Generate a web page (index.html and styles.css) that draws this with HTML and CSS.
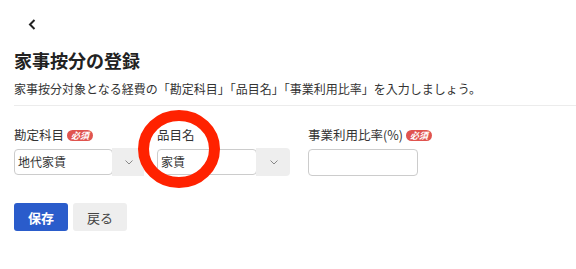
FILE: index.html
```html
<!DOCTYPE html>
<html lang="ja">
<head>
<meta charset="utf-8">
<link rel="stylesheet" href="styles.css">
</head>
<body>
<div class="page">
  <div class="topbar">
    <svg class="back" width="8" height="11" viewBox="0 0 8 11"><path d="M6.5 1 L2 5.5 L6.5 10" fill="none" stroke="#222" stroke-width="2"/></svg>
  </div>
  <h1 class="title">家事按分の登録</h1>
  <p class="desc">家事按分対象となる経費の「勘定科目」「品目名」「事業利用比率」を入力しましょう。</p>
  <div class="divider"></div>
  <div class="form">
    <div class="field f1">
      <div class="label">勘定科目<span class="badge">必須</span></div>
      <div class="select">
        <div class="input w98">地代家賃</div>
        <div class="caret"><svg width="8" height="5" viewBox="0 0 8 5"><path d="M0.5 0.5 L4 4 L7.5 0.5" fill="none" stroke="#888" stroke-width="1"/></svg></div>
      </div>
    </div>
    <div class="field f2">
      <div class="label">品目名</div>
      <div class="select">
        <div class="input w99">家賃</div>
        <div class="caret c2"><svg width="8" height="5" viewBox="0 0 8 5"><path d="M0.5 0.5 L4 4 L7.5 0.5" fill="none" stroke="#888" stroke-width="1"/></svg></div>
      </div>
      <svg class="ring" width="84" height="80" viewBox="0 0 84 80"><ellipse cx="42" cy="40" rx="35.5" ry="33.5" fill="none" stroke="#ff2200" stroke-width="11"/></svg>
    </div>
    <div class="field f3">
      <div class="label">事業利用比率(%)<span class="badge">必須</span></div>
      <div class="input w110"></div>
    </div>
  </div>
  <div class="actions">
    <button class="btn primary">保存</button>
    <button class="btn secondary">戻る</button>
  </div>
</div>
</body>
</html>
```

FILE: styles.css
```css
* { box-sizing: border-box; }
html, body { margin: 0; padding: 0; background: #fff; }
body {
  font-family: "Noto Sans CJK JP", "Noto Sans", sans-serif;
  color: #333;
  width: 576px;
  height: 269px;
  overflow: hidden;
}
.page { padding-left: 14px; }
.topbar { height: 48px; padding-top: 19px; padding-left: 14px; }
.back { display: block; }
.title {
  margin: 0;
  font-size: 18px;
  line-height: 24px;
  font-weight: 700;
  color: #222;
}
.desc {
  margin: 8px 0 0;
  font-size: 12px;
  line-height: 18px;
  color: #333;
  white-space: nowrap;
}
.divider { height: 1px; background: #ececec; margin-top: 7px; }
.form { display: flex; padding-top: 20px; }
.field { position: relative; }
.f1 { width: 143px; }
.f2 { width: 151px; }
.label {
  font-size: 12.5px;
  line-height: 18px;
  height: 18px;
  color: #333;
  display: flex;
  align-items: center;
  white-space: nowrap;
}
.badge {
  display: inline-block;
  margin-left: 3px;
  background: #e0544f;
  color: #fff;
  font-size: 9px;
  line-height: 11px;
  height: 11px;
  padding: 0 4px;
  border-radius: 6px;
  font-weight: 700;
  font-style: italic;
}
.select { display: flex; align-items: center; margin-top: 4px; }
.input {
  height: 26px;
  border: 1px solid #ccc;
  border-radius: 4px;
  background: #fff;
  font-size: 12px;
  line-height: 24px;
  padding-left: 3px;
  color: #333;
}
.f3 .input { margin-top: 5px; height: 27px; }
.w98 { width: 99px; }
.w99 { width: 100px; }
.w110 { width: 110px; }
.caret {
  width: 32px;
  height: 28px;
  background: #eeeeee;
  display: flex;
  align-items: center;
  justify-content: center;
  padding-left: 1px;
  margin-left: -1px;
}
.c2 { width: 34px; border-radius: 0 4px 4px 0; }
.caret svg { display: block; }
.ring { position: absolute; left: -20px; top: -17px; pointer-events: none; }
.actions { display: flex; gap: 5px; margin-top: 27px; }
.btn {
  font-family: "Noto Sans CJK JP", "Noto Sans", sans-serif;
  height: 28px;
  width: 54px;
  border: none;
  border-radius: 3px;
  font-size: 13px;
  padding: 0;
}
.primary { background: #2a5ccb; color: #fff; font-weight: 700; }
.secondary { background: #eeeeee; color: #444; }
```
